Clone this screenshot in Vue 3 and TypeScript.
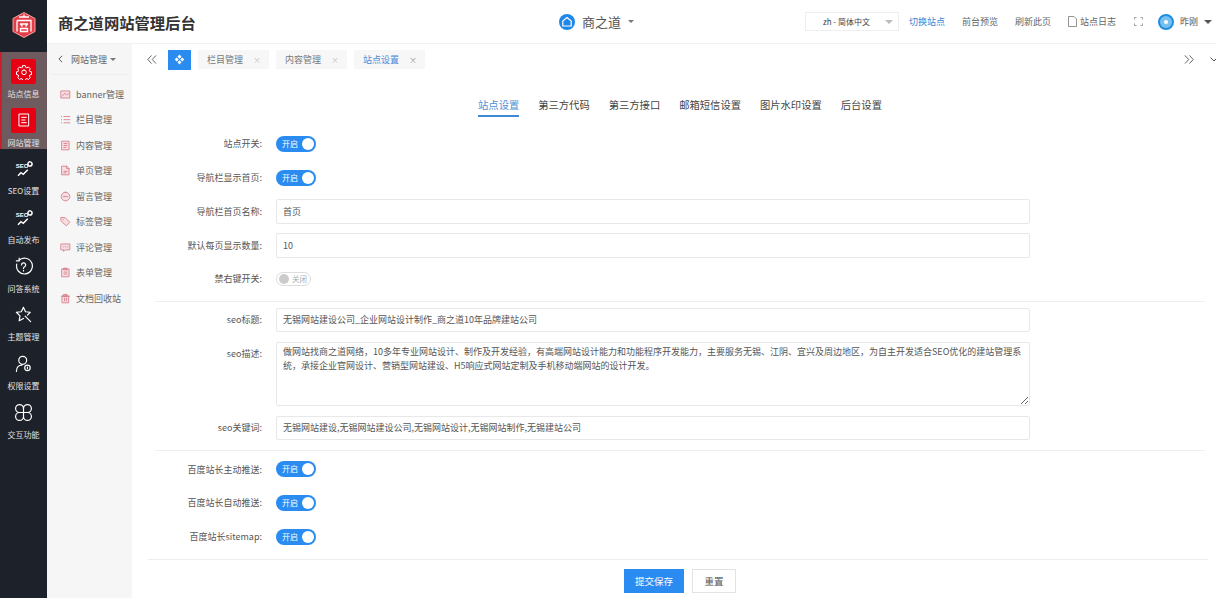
<script setup lang="ts">
const seoIcon = 'seo'
const sideItems = [
  { label: '站点信息', active: true, d: 'M10 2.500h4l.6 2.600 1.700.7 2.300-1.400 2.800 2.800-1.400 2.300.7 1.700 2.600.6v4l-2.600.6-.7 1.700 1.400 2.300-2.800 2.800-2.300-1.400-1.700.7-.6 2.600h-4l-.6-2.600-1.700-.7-2.300 1.400-2.800-2.800 1.400-2.300-.7-1.700-2.600-.6v-4l2.600-.6.7-1.700-1.400-2.300 2.800-2.800 2.300 1.400 1.700-.7zM12 9a3.500 3.500 0 1 0 0 7 3.500 3.500 0 0 0 0-7z' },
  { label: '网站管理', active: true, d: 'M5 3h14v18H5zM8.500 8h7M8.500 12h5M8.500 16h7' },
  { label: 'SEO设置', active: false, d: seoIcon },
  { label: '自动发布', active: false, d: seoIcon },
  { label: '问答系统', active: false, d: 'M6 4.500A10 10 0 1 1 3.500 9M6.500 1.500V5H3M9.500 10a2.600 2.600 0 1 1 3.800 2.300c-1 .6-1.300 1.100-1.300 2.200M12 17v.6' },
  { label: '主题管理', active: false, d: 'M12 3l2.500 5.500 6 .7-3.500 3.500M14 14l7 7M12 17l-5.500 3 1.100-6.200L3 9.200l6.200-.7L12 3' },
  { label: '权限设置', active: false, d: 'M11 3a5 5 0 1 1 0 10 5 5 0 0 1 0-10zM3 22c0-5 3-8 7-8M17 14a3.500 3.500 0 1 1 0 7 3.500 3.500 0 0 1 0-7zM17 16.500v2' },
  { label: '交互功能', active: false, d: 'M12 12H7a5 5 0 1 1 5-5zM12 12h5a5 5 0 1 0-5-5zM12 12H7a5 5 0 1 0 5 5zM12 12h5a5 5 0 1 1-5 5z' },
]
const subItems = [
  { label: 'banner管理', d: 'M1.500 2.500h11v9h-11zM3 9l3-3.500 2.500 2 2.500-1.500' },
  { label: '栏目管理', d: 'M2 3v.5M2 7v.5M2 11v.5M5 3.200h7.500M5 7.200h7.500M5 11.200h7.500' },
  { label: '内容管理', d: 'M2.500 1.500h9v11h-9zM5 4.500h4M5 7h4M5 9.500h2.500' },
  { label: '单页管理', d: 'M2.500 1.500h6l3 3v8h-9zM8.500 1.500v3h3M5 8h4M5 10h2.500' },
  { label: '留言管理', d: 'M7 1.500a5.500 5.500 0 1 1 0 11 5.500 5.500 0 0 1 0-11zM4.500 7h5' },
  { label: '标签管理', d: 'M1.500 2h5l6 6-4.500 4.500-6.500-6zM4 4.500v.3' },
  { label: '评论管理', d: 'M1.500 2.500h11v7.500h-6l-2 2v-2h-3zM4.500 6.200h.4M7 6.200h.4M9.500 6.200h.4' },
  { label: '表单管理', d: 'M2.500 2.500h9v10h-9zM5 1.500h4v2H5zM5 6.500h4M5 9h4' },
  { label: '文档回收站', d: 'M3 4h8v8.500H3zM1.800 4h10.400M5 1.800h4V4H5zM5.800 6.500v3.500M8.200 6.500v3.500' },
]
const tabs = ['站点设置', '第三方代码', '第三方接口', '邮箱短信设置', '图片水印设置', '后台设置']
const openTabs = [
  { label: '栏目管理', active: false },
  { label: '内容管理', active: false },
  { label: '站点设置', active: true },
]
const seoTitle = '无锡网站建设公司_企业网站设计制作_商之道10年品牌建站公司'
const seoDesc = '做网站找商之道网络\uFF0C10多年专业网站设计、制作及开发经验\uFF0C有高端网站设计能力和功能程序开发能力\uFF0C主要服务无锡、江阴、宜兴及周边地区\uFF0C为自主开发适合SEO优化的建站管理系统\uFF0C承接企业官网设计、营销型网站建设、H5响应式网站定制及手机移动端网站的设计开发。'
const seoWords = '无锡网站建设,无锡网站建设公司,无锡网站设计,无锡网站制作,无锡建站公司'
const baiduRows = ['百度站长主动推送:', '百度站长自动推送:', '百度站长sitemap:']
</script>

<template>
  <div class="page">
    <aside class="rail">
      <div class="logo">
        <svg viewBox="0 0 26 28" class="logo-svg">
          <path d="M13 1.500 24 7.500v13L13 26.500 2 20.500v-13z" class="logo-hex" />
          <path d="M8 6h10M13 3.500V6M6 9.500h14v11M6 9.500v11M9 13h8M9.500 13l2 2.500M16.500 13l-2 2.500M9.500 17.500h7v3h-7z" class="logo-mark" />
        </svg>
      </div>
      <div v-for="item in sideItems" :key="item.label" class="rail-item" :class="{ active: item.active }">
        <div class="rail-icon">
          <svg v-if="item.d === 'seo'" viewBox="0 0 24 24" class="seo-svg">
            <text x="1" y="11" class="seo-text">SEO</text>
            <path d="M4 21l4-4 3 2 6-6" />
            <path d="M20 2.500a2.800 2.800 0 1 1-.1 5.600 2.800 2.800 0 0 1 .1-5.600z" />
          </svg>
          <svg v-else viewBox="0 0 24 24" class="rail-svg"><path :d="item.d" /></svg>
        </div>
        <span class="rail-label">{{ item.label }}</span>
      </div>
    </aside>

    <div class="shell">
      <header class="top">
        <h1 class="brand">商之道网站管理后台</h1>
        <div class="site">
          <svg viewBox="0 0 16 16" class="site-icon">
            <circle cx="8" cy="8" r="8" class="site-dot" />
            <path d="M8 3.500 12.200 7v5H3.800V7z" class="site-home" />
          </svg>
          <span>商之道</span>
          <i class="caret"></i>
        </div>
        <div class="tools">
          <div class="lang"><span>zh - 简体中文</span><i class="caret light"></i></div>
          <a class="tool blue">切换站点</a>
          <a class="tool">前台预览</a>
          <a class="tool">刷新此页</a>
          <a class="tool log">
            <svg viewBox="0 0 9 11" class="doc"><path d="M.5.500h5.500l2.500 2.500v7.500H.5z" /></svg>站点日志
          </a>
          <svg viewBox="0 0 9 9" class="full"><path d="M.5 2.500V.5H2.500M6.500 .5h2V2.500M8.500 6.500v2H6.500M2.500 8.500H.5V6.500" /></svg>
          <div class="user">
            <span class="avatar"><i></i></span>
            <span class="uname">昨刚</span>
            <i class="caret dark"></i>
          </div>
        </div>
      </header>

      <div class="body">
        <nav class="sub">
          <div class="sub-head">
            <svg viewBox="0 0 6 10" class="back"><path d="M5 1 1 5l4 4" /></svg>
            <span>网站管理</span>
            <i class="caret small"></i>
          </div>
          <ul class="sub-list">
            <li v-for="item in subItems" :key="item.label" class="sub-item">
              <svg viewBox="0 0 14 14" class="sub-svg"><path :d="item.d" /></svg>
              <span>{{ item.label }}</span>
            </li>
          </ul>
        </nav>

        <main class="main">
          <div class="tabbar">
            <svg viewBox="0 0 11 10" class="chev"><path d="M5 .5.800 5 5 9.500M10 .5 5.800 5 10 9.500" /></svg>
            <span class="home-btn">
              <svg viewBox="0 0 12 12"><path d="M6 .5 8.200 3 6 5.200 3.800 3zM3 3.800 5.200 6 3 8.200.8 6zM9 3.800 11.200 6 9 8.200 6.800 6zM6 6.800 8.200 9 6 11.500 3.800 9z" /></svg>
            </span>
            <span v-for="t in openTabs" :key="t.label" class="open-tab" :class="{ on: t.active }">
              <span>{{ t.label }}</span><b>×</b>
            </span>
            <div class="tab-end">
              <svg viewBox="0 0 11 10" class="chev"><path d="M1 .5 5.200 5 1 9.500M6 .5 10.200 5 6 9.500" /></svg>
              <svg viewBox="0 0 8 5" class="down"><path d="M.5.500 4 4 7.500.500" /></svg>
            </div>
          </div>

          <section class="card">
            <div class="tabs">
              <span v-for="(t, i) in tabs" :key="t" class="tab" :class="{ on: i === 0 }">{{ t }}</span>
            </div>

            <div class="group first">
              <div class="row">
                <label>站点开关:</label>
                <span class="sw"><em>开启</em><i></i></span>
              </div>
              <div class="row">
                <label>导航栏显示首页:</label>
                <span class="sw"><em>开启</em><i></i></span>
              </div>
              <div class="row">
                <label>导航栏首页名称:</label>
                <input class="field" value="首页" />
              </div>
              <div class="row">
                <label>默认每页显示数量:</label>
                <input class="field" value="10" />
              </div>
              <div class="row">
                <label>禁右键开关:</label>
                <span class="sw off"><i></i><em>关闭</em></span>
              </div>
            </div>

            <div class="group seo">
              <div class="row tight">
                <label>seo标题:</label>
                <input class="field short" :value="seoTitle" />
              </div>
              <div class="row tight top-align">
                <label>seo描述:</label>
                <textarea class="field area" :value="seoDesc"></textarea>
              </div>
              <div class="row tight">
                <label>seo关键词:</label>
                <input class="field short" :value="seoWords" />
              </div>
            </div>

            <div class="group last">
              <div v-for="r in baiduRows" :key="r" class="row">
                <label>{{ r }}</label>
                <span class="sw"><em>开启</em><i></i></span>
              </div>
            </div>

            <div class="actions">
              <button class="btn primary" type="button">提交保存</button>
              <button class="btn" type="button">重置</button>
            </div>
          </section>
        </main>
      </div>
    </div>
  </div>
</template>

<style>
html, body { margin: 0; height: 100%; overflow: hidden; background: #fff; }
</style>

<style scoped>
.page {
  display: flex;
  width: 1216px;
  height: 598px;
  overflow: hidden;
  font-family: "Noto Sans CJK SC", "Liberation Sans", sans-serif;
  color: #666;
  font-size: 9px;
}
.rail { flex: none; width: 47px; background: #1d2129; }
.logo { height: 52px; display: flex; align-items: center; justify-content: center; }
.logo-svg { width: 26px; height: 28px; margin-top: -2px; }
.logo-hex { fill: #e33f48; stroke: #f7a3a3; stroke-width: 1; }
.logo-mark { fill: none; stroke: #fff; stroke-width: 1.300; }
.rail-item {
  height: 48.700px;
  display: flex;
  flex-direction: column;
  align-items: center;
  box-sizing: border-box;
  padding-top: 7px;
  color: #e2e2e2;
}
.rail-item.active { background: #6d5b60; border-left: 2px solid #c8202c; padding-right: 2px; }
.rail-icon { width: 25px; height: 25px; display: flex; align-items: center; justify-content: center; border-radius: 2px; }
.active .rail-icon { background: #e60012; }
.rail-svg { width: 19px; height: 19px; fill: none; stroke: #fff; stroke-width: 1.500; stroke-linejoin: round; stroke-linecap: round; fill-rule: evenodd; }
.active .rail-svg { width: 16px; height: 16px; }
.seo-svg { width: 18px; height: 18px; fill: none; stroke: #fff; stroke-width: 2; }
.seo-text { font: 800 8px "Liberation Sans", sans-serif; fill: #fff; stroke: none; }
.rail-label { font-size: 8px; line-height: 12px; margin-top: 4px; white-space: nowrap; }

.shell { flex: 1; min-width: 0; display: flex; flex-direction: column; }
.top {
  flex: none;
  height: 44px;
  box-sizing: border-box;
  border-bottom: 1px solid #f2f2f2;
  display: flex;
  align-items: center;
  padding-left: 11px;
}
.brand { margin: 0; width: 138px; font-size: 15.300px; font-weight: 700; color: #333; white-space: nowrap; line-height: 20px; }
.site { display: flex; align-items: center; margin-left: 363px; font-size: 13px; color: #555; }
.site-icon { width: 16px; height: 16px; margin-right: 7px; }
.site-dot { fill: #1f87e8; }
.site-home { fill: none; stroke: #fff; stroke-width: 1.200; }
.caret { display: block; width: 0; height: 0; border: 3px solid transparent; border-top: 3px solid #777; border-bottom: 0; margin-left: 7px; }
.caret.light { border-width: 4px; border-bottom: 0; border-top-color: #bbb; margin: 0; }
.caret.dark { border-width: 4px; border-bottom: 0; border-top-color: #555; margin-left: 6px; }
.caret.small { margin-left: 3px; }
.tools { margin-left: auto; display: flex; align-items: center; padding-right: 4px; }
.lang {
  width: 94px;
  height: 19px;
  box-sizing: border-box;
  border: 1px solid #eee;
  display: flex;
  align-items: center;
  justify-content: space-between;
  padding: 0 5px 0 17px;
  font-size: 8px;
  color: #444;
}
.tool { margin-left: 17px; white-space: nowrap; color: #666; }
.tool:first-of-type { margin-left: 10px; }
.tool.blue { color: #3b82d8; }
.log { display: flex; align-items: center; }
.doc { width: 9px; height: 11px; margin-right: 3px; fill: none; stroke: #777; stroke-width: .8; }
.full { width: 9px; height: 9px; margin-left: 18px; fill: none; stroke: #888; stroke-width: .8; }
.user { display: flex; align-items: center; margin-left: 15px; }
.avatar { width: 16px; height: 16px; box-sizing: border-box; border: 2px solid #1f8fe0; border-radius: 50%; background: #78c0f2; display: flex; align-items: center; justify-content: center; }
.avatar i { width: 4px; height: 4px; border-radius: 50%; background: #fff; }
.uname { margin-left: 6px; color: #555; }

.body { flex: 1; min-height: 0; display: flex; }
.sub { flex: none; width: 85px; background: #f6f6f7; }
.sub-head { height: 30px; margin: 0 4px; border-bottom: 1px solid #eee; display: flex; align-items: center; padding-left: 7px; color: #666; }
.back { width: 5px; height: 8px; margin-right: 8px; fill: none; stroke: #555; stroke-width: 1.200; }
.sub-list { list-style: none; margin: 6.500px 0 0; padding: 0; }
.sub-item { height: 25.500px; display: flex; align-items: center; padding-left: 13px; }
.sub-svg { width: 11px; height: 11px; margin-right: 5px; flex: none; fill: #f6dfe2; stroke: #d4717f; stroke-width: 1; stroke-linecap: round; }
.sub-item span { white-space: nowrap; }

.main { flex: 1; min-width: 0; display: flex; flex-direction: column; }
.tabbar { flex: none; height: 31px; display: flex; align-items: center; padding-left: 15px; box-sizing: border-box; }
.chev { width: 10px; height: 9px; fill: none; stroke: #555; stroke-width: 1; }
.home-btn { width: 23px; height: 20px; margin-left: 11px; background: #2a8cf0; display: flex; align-items: center; justify-content: center; }
.home-btn svg { width: 11px; height: 11px; fill: #fff; }
.open-tab { width: 71px; height: 19px; margin-left: 7px; background: #f7f7f7; display: flex; align-items: center; justify-content: space-between; box-sizing: border-box; padding: 0 8px 0 9px; color: #777; }
.open-tab b { font-weight: 400; font-size: 8px; color: #c4c4c4; }
.open-tab.on { color: #4a89d8; }
.open-tab.on b { color: #999; }
.tab-end { margin-left: auto; display: flex; align-items: center; gap: 16px; margin-right: -2px; }
.down { width: 8px; height: 5px; fill: none; stroke: #555; stroke-width: 1; }

.card { flex: 1; margin-left: 16px; margin-right: 8px; display: flex; flex-direction: column; min-height: 0; }
.tabs { flex: none; height: 42px; margin-top: 10px; display: flex; justify-content: center; gap: 19px; align-items: flex-start; padding-left: 4px; }
.tab { height: 24px; padding-top: 12px; line-height: 16px; font-size: 10.300px; color: #444; white-space: nowrap; box-sizing: content-box; }
.tab.on { color: #4a8fd8; border-bottom: 2px solid #3d8bd8; height: 18px; }

.group { margin: 0 3px 0 7px; padding-bottom: 5px; border-bottom: 1px solid #eee; }
.group.seo { padding-top: 6px; padding-bottom: 10px; display: flex; flex-direction: column; gap: 10px; }
.group.last { margin: 0; padding-top: 1.500px; padding-left: 7px; }
.row { height: 33.750px; display: flex; align-items: center; }
.row label { flex: none; width: 107px; text-align: right; margin-right: 14px; white-space: nowrap; color: #555; }
.row.tight { height: auto; }
.row.top-align { align-items: flex-start; }
.row.top-align label { padding-top: 5px; }
.field {
  box-sizing: border-box;
  width: 754px;
  height: 25px;
  border: 1px solid #e8e8e8;
  border-radius: 2px;
  padding: 0 6px;
  font: 9px/15px "Noto Sans CJK SC", "Liberation Sans", sans-serif;
  color: #555;
  background: #fff;
  outline: none;
}
.field.short { height: 24px; }
.area { height: 64px; padding: 2px 6px; line-height: 14px; display: block; resize: vertical; overflow: hidden; }
.sw {
  width: 40px;
  height: 16px;
  border-radius: 8px;
  background: #2a8cf0;
  display: flex;
  align-items: center;
  justify-content: space-between;
  box-sizing: border-box;
  padding: 0 2px 0 6px;
  color: #fff;
}
.sw em { font-style: normal; font-size: 8px; line-height: 16px; }
.sw i { width: 12px; height: 12px; border-radius: 50%; background: #fff; }
.sw.off { width: 35px; height: 14px; background: #fff; border: 1px solid #ddd; padding: 0 3px 0 2px; color: #aaa; }
.sw.off i { width: 10px; height: 10px; background: #ccc; }
.sw.off em { font-size: 7.500px; line-height: 12px; }
.actions { display: flex; justify-content: center; gap: 8px; margin-top: 9px; padding-left: 4px; }
.btn {
  box-sizing: border-box;
  width: 44px;
  height: 24px;
  border: 1px solid #e3e3e3;
  background: #fff;
  font: 9.500px "Noto Sans CJK SC", "Liberation Sans", sans-serif;
  color: #555;
  padding: 0;
}
.btn.primary { width: 60px; background: #2a8cf0; border-color: #2a8cf0; color: #fff; }
</style>
